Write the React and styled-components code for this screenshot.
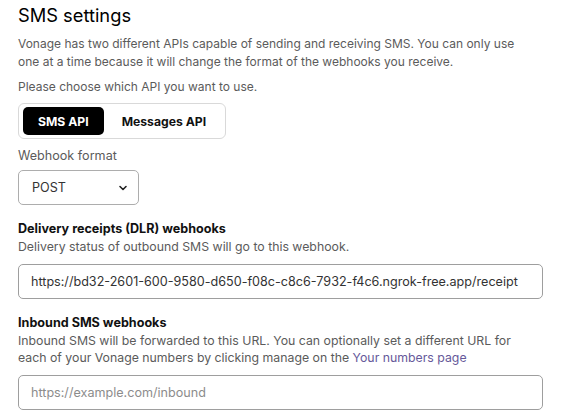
import React from 'react';
import styled, {createGlobalStyle} from 'styled-components';

const Global = createGlobalStyle`
  body {
    margin: 0;
    background: #ffffff;
    font-family: Inter, "Noto Sans", sans-serif;
    -webkit-font-smoothing: antialiased;
  }
`

const Page = styled.div`
  width: 525px;
  padding: 3px 20px 0 18px;
  display: flex;
  flex-direction: column;
`

const Title = styled.h2`
  margin: 0;
  font-size: 18.3px;
  line-height: 24px;
  font-weight: 400;
  color: #000000;
`

const Text = styled.p`
  margin: ${(props) => props.margin || '0'};
  font-size: ${(props) => props.size || '12.3px'};
  line-height: ${(props) => props.lh || '18px'};
  color: #5b5b5b;
  white-space: nowrap;

  a {
    color: #66599a;
    text-decoration: none;
  }
`

const Toggle = styled.div`
  margin-top: 7px;
  width: 208px;
  box-sizing: border-box;
  padding: 3px 4px;
  border: 1px solid #d9d9d9;
  border-radius: 6px;
  display: flex;
  align-items: center;
`

const ToggleBtn = styled.button`
  height: 28px;
  padding: 0 ${(props) => (props.active ? '15px' : '18px')};
  border: none;
  border-radius: 5px;
  font-family: inherit;
  font-size: 12.2px;
  font-weight: 700;
  white-space: nowrap;
  background: ${(props) => (props.active ? '#000000' : 'transparent')};
  color: ${(props) => (props.active ? '#ffffff' : '#111111')};
  cursor: pointer;
`

const Label = styled.div`
  margin-top: 8px;
  font-size: 12.6px;
  line-height: 18px;
  color: #5b5b5b;
`

const Select = styled.div`
  margin-top: 5px;
  width: 121px;
  height: 35px;
  box-sizing: border-box;
  border: 1px solid #adadad;
  border-radius: 5px;
  display: flex;
  align-items: center;
  justify-content: space-between;
  padding: 0 10px 0 13px;
  font-size: 12.6px;
  color: #333333;

  svg {
    width: 10px;
    height: 10px;
  }
`

const Heading = styled.div`
  margin-top: ${(props) => props.top || '15px'};
  font-size: 12.6px;
  line-height: 17.5px;
  font-weight: 700;
  color: #111111;
`

const Input = styled.input`
  margin-top: ${(props) => props.top || '9px'};
  width: 100%;
  height: 35px;
  box-sizing: border-box;
  border: 1px solid #9e9e9e;
  border-radius: 5px;
  padding: 0 12px;
  font-family: inherit;
  font-size: 12.6px;
  color: #333333;
  outline: none;

  &::placeholder {
    color: #8c8c8c;
  }
`

const Chevron = () => (
  <svg viewBox="0 0 10 10" fill="none">
    <path d="M2 3.5 L5 6.5 L8 3.5" stroke="#222" strokeWidth="1.6" strokeLinecap="round" strokeLinejoin="round" />
  </svg>
)

export default function App() {
  return (
    <Page>
      <Global />
      <Title>SMS settings</Title>
      <Text margin="8px 0 0 0" size="12px">
        Vonage has two different APIs capable of sending and receiving SMS. You can only use
        <br />
        one at a time because it will change the format of the webhooks you receive.
      </Text>
      <Text margin="7px 0 0 0" size="12px">Please choose which API you want to use.</Text>
      <Toggle>
        <ToggleBtn active>SMS API</ToggleBtn>
        <ToggleBtn>Messages API</ToggleBtn>
      </Toggle>
      <Label>Webhook format</Label>
      <Select>
        <span>POST</span>
        <Chevron />
      </Select>
      <Heading>Delivery receipts (DLR) webhooks</Heading>
      <Text lh="17.5px">Delivery status of outbound SMS will go to this webhook.</Text>
      <Input
        top="9px"
        readOnly
        value="https://bd32-2601-600-9580-d650-f08c-c8c6-7932-f4c6.ngrok-free.app/receipt"
      />
      <Heading>Inbound SMS webhooks</Heading>
      <Text lh="17.5px">
        Inbound SMS will be forwarded to this URL. You can optionally set a different URL for
        <br />
        each of your Vonage numbers by clicking manage on the <a href="#">Your numbers page</a>
      </Text>
      <Input top="8px" placeholder="https://example.com/inbound" />
    </Page>
  );
}
